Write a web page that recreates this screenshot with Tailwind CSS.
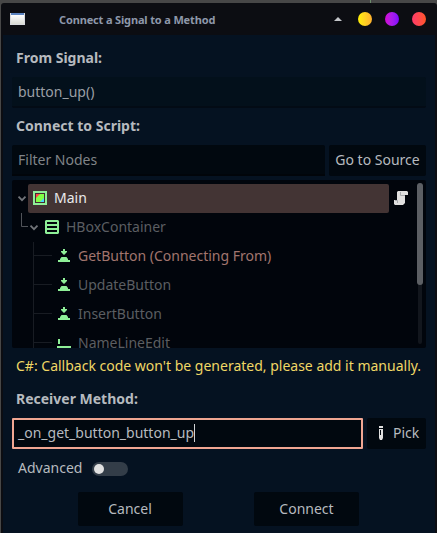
<!DOCTYPE html>
<html lang="en">
<head>
<meta charset="utf-8">
<title>Connect a Signal to a Method</title>
<script src="https://cdn.jsdelivr.net/npm/@tailwindcss/browser@4"></script>
</head>
<body class="h-[533px] w-[437px] overflow-hidden bg-[#474747] pl-px pt-[3px] font-['Noto_Sans',sans-serif] text-[14px] leading-[20px] text-[#b6babf]">
<svg class="hidden">
  <symbol id="btn" viewBox="0 0 16 16"><path fill="#8eef97" d="M7 1h2v2h2v1L8 7 5 4V3h2zM5.500 9h5l1.500 2v1h2v2H2v-2h2v-1z"/></symbol>
</svg>
<main class="relative flex h-[530px] w-[436px] flex-col rounded-t-[3px] bg-[#0c0d12]">
  <header class="flex h-[32px] shrink-0 items-center pl-[9px] pr-[11px]">
    <svg width="16" height="14" viewBox="0 0 16 14"><defs><linearGradient id="w" x2="0" y2="1"><stop stop-color="#fff"/><stop offset="1" stop-color="#d9dbd5"/></linearGradient></defs><path fill="#d8dade" d="M0 1h15v12H0z"/><path fill="#5b83c0" d="M1 1h13v2H1z"/><path fill="url(#w)" d="M1 3h13v9H1z"/></svg>
    <h1 class="ml-[33px] mt-[1px] whitespace-nowrap text-[11px] font-bold leading-[16px] tracking-[-0.150px] text-[#8e98aa]">Connect a Signal to a Method</h1>
    <div class="ml-auto flex items-center gap-[13px]">
      <svg class="mr-[3px]" width="8" height="4" viewBox="0 0 8 4"><path fill="#c4c6ca" d="M4 0 8 4H0z"/></svg>
      <i class="size-[14px] rounded-full bg-linear-to-r from-[#fff000] to-[#ffaf2e]"></i>
      <i class="size-[14px] rounded-full bg-linear-to-r from-[#d400d4] to-[#8000ff]"></i>
      <i class="size-[14px] rounded-full bg-linear-to-r from-[#ff3a68] to-[#ff5522]"></i>
    </div>
    <i class="absolute left-[369px] top-[-3px] h-[3px] w-px bg-[#6b8a6b]"></i>
  </header>
  <section class="ml-[2px] mr-[2px] flex flex-1 flex-col bg-[#051221] px-[9px] pt-[13px]">
    <h2 class="h-[20px] pl-[4px] font-bold">From Signal:</h2>
    <div class="mt-[9px] h-[31px] rounded-[2px] border-b-2 border-[#030b15] bg-[#03101b] pl-[6px] leading-[30px] text-[#9a9fa5]">button_up()</div>
    <h2 class="mt-[8px] h-[20px] pl-[4px] font-bold">Connect to Script:</h2>
    <div class="mt-[9px] flex h-[31px] gap-[4px]">
      <div class="w-[313px] rounded-t-[2px] border-b-2 border-[#01050a] bg-[#01080f] pl-[6px] leading-[30px] text-[#808488]">Filter Nodes</div>
      <button class="w-[97px] whitespace-nowrap rounded-[2px] bg-[#01080f] pb-[2px] leading-[29px]">Go to Source</button>
    </div>
    <div class="relative mt-[4px] h-[168px] shrink-0 overflow-hidden rounded-[2px] bg-[#01050c] pt-[4px] text-[#5b5e62]">
      <svg class="absolute left-0 top-0" width="60" height="168" fill="none">
        <path stroke="#505359" d="M9.500 33v13.500H16"/>
        <path stroke="#181c23" d="M21.500 62v106M22 75.500h18M22 104.500h18M22 133.500h18M22 162.500h18"/>
        <path stroke="#72757a" stroke-width="1.800" d="m6.500 16.700 3.500 3.500 3.500-3.500M18.500 45.700l3.500 3.500 3.500-3.500"/>
      </svg>
      <div class="ml-[16px] flex h-[29px] items-start">
        <div class="flex h-[29px] w-[361px] items-start gap-[6px] rounded-[2px] bg-[#433434] pl-[4px] pt-[4px] text-[#eaeaec]">
          <svg class="mt-[2px]" width="16" height="16"><path fill="#8eef97" d="M1 1h14v14H1z"/><path fill="#432b30" d="M3 3h10v10H3z"/><path fill="#80ff45" d="M4 4h8v8H4z"/><path fill="#ff4545" d="M4 4h4L4 8z"/><path fill="#45d7ff" d="M12 8v4H8z"/></svg>
          <span>Main</span>
        </div>
        <svg class="ml-[4px] mt-[6px]" width="16" height="16"><path fill="#e0e0e0" d="M5 1h9l1 1v3h-3v8l-2 2H2l-1-1v-4h3V2z"/><path fill="none" stroke="#a9abae" d="M7.500 2v3.500H12M2 10.500h2.500V13"/></svg>
      </div>
      <div class="flex h-[29px] items-start gap-[6px] pl-[32px] pt-[4px]"><svg class="mt-[2px]" width="16" height="16"><path fill="#8eef97" fill-rule="evenodd" d="M2 1h12l1 1v12l-1 1H2l-1-1V2zM3 3v2h10V3zm0 4v2h10V7zm0 4v2h10v-2z"/></svg>HBoxContainer</div>
      <div class="flex h-[29px] items-start gap-[6px] pl-[44px] pt-[4px] text-[#a1756e]"><svg class="mt-[2px]" width="16" height="16"><use href="#btn"/></svg>GetButton (Connecting From)</div>
      <div class="flex h-[29px] items-start gap-[6px] pl-[44px] pt-[4px]"><svg class="mt-[2px]" width="16" height="16"><use href="#btn"/></svg>UpdateButton</div>
      <div class="flex h-[29px] items-start gap-[6px] pl-[44px] pt-[4px]"><svg class="mt-[2px]" width="16" height="16"><use href="#btn"/></svg>InsertButton</div>
      <div class="flex h-[29px] items-start gap-[6px] pl-[44px] pt-[4px]"><svg class="mt-[2px]" width="16" height="16"><path fill="#8eef97" d="M2 4h2v5H2zM1 11h14v3H1z"/></svg>NameLineEdit</div>
      <div class="absolute right-[4px] top-[3px] h-[161px] w-[4px] rounded-full bg-[#12161d]"></div>
      <div class="absolute right-[3px] top-[3px] h-[102px] w-[6px] rounded-full bg-[#5c5f64]"></div>
    </div>
    <p class="mt-[8px] h-[20px] whitespace-nowrap pl-[4px] text-[#f0d765]">C#: Callback code won't be generated, please add it manually.</p>
    <h2 class="mt-[13px] h-[20px] pl-[4px] font-bold">Receiver Method:</h2>
    <div class="mt-[9px] flex h-[31px] gap-[4px]">
      <div class="flex w-[351px] items-center rounded-[1px] border-2 border-[#f0a692] bg-[#01080f] pb-px pl-[4px]">_on_get_button_button_up<i class="h-[18px] w-px bg-[#d0d2d4]"></i></div>
      <button class="flex w-[59px] items-center gap-[6px] rounded-[2px] bg-[#01080f] pb-px pl-[6px]"><svg width="14" height="16"><path fill="#e0e0e0" fill-rule="evenodd" d="M6 1h4v2H6zM6 4h4v9l-1 2H7l-1-2zm1 1v5h1V5z"/></svg>Pick</button>
    </div>
    <div class="mt-[9px] flex h-[20px] items-center gap-[10px] pl-[6px]">Advanced
      <span class="mt-px flex h-[14px] w-[36px] items-center rounded-full bg-[#333d48] pl-[2px]"><i class="size-[10px] rounded-full bg-[#e0e0e0]"></i></span>
    </div>
    <footer class="mt-[14px] flex gap-[71px] pl-[66px]">
      <button class="h-[34px] w-[105px] rounded-[2px] bg-[#01080f] pr-px">Cancel</button>
      <button class="h-[34px] w-[105px] rounded-[2px] bg-[#01080f]">Connect</button>
    </footer>
  </section>
</main>
</body>
</html>
